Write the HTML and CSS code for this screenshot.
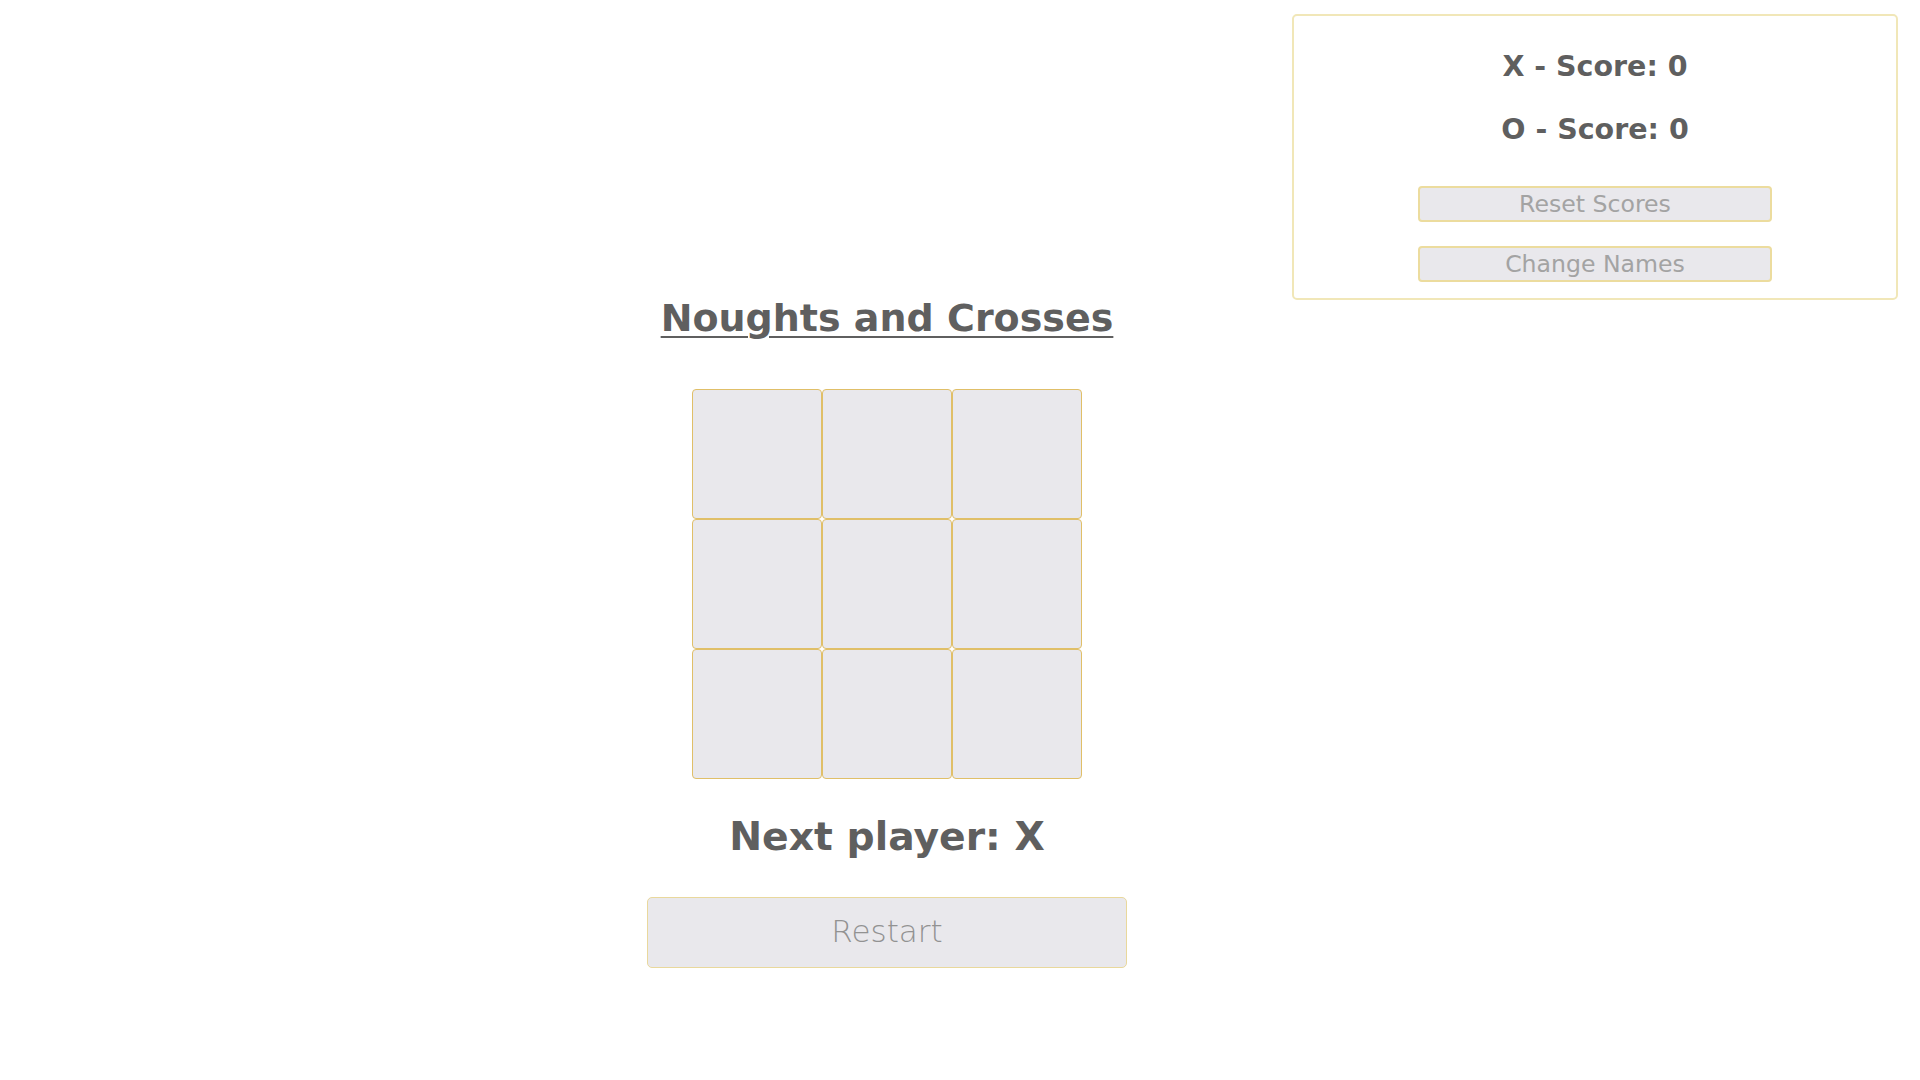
FILE: index.html
```html
<!DOCTYPE html>
<html lang="en">
<head>
<meta charset="utf-8">
<title>Noughts and Crosses</title>
<link rel="stylesheet" href="styles.css">
</head>
<body>
<div class="page">
  <main class="game">
    <h1 class="title">Noughts and Crosses</h1>
    <div class="board">
      <button class="cell"></button><button class="cell"></button><button class="cell"></button>
      <button class="cell"></button><button class="cell"></button><button class="cell"></button>
      <button class="cell"></button><button class="cell"></button><button class="cell"></button>
    </div>
    <h2 class="status">Next player: X</h2>
    <button class="restart">Restart</button>
  </main>
  <aside class="scores">
    <div class="score">X - Score: 0</div>
    <div class="score">O - Score: 0</div>
    <button class="small-btn first">Reset Scores</button>
    <button class="small-btn">Change Names</button>
  </aside>
</div>
</body>
</html>
```
FILE: styles.css
```css
* { box-sizing: border-box; }
html, body { margin: 0; padding: 0; background: #ffffff; }
body {
  font-family: "DejaVu Sans", "Liberation Sans", sans-serif;
  color: #5f5f5f;
  width: 1920px;
  height: 1080px;
  overflow: hidden;
}
.page {
  display: grid;
  grid-template-columns: 1fr;
  grid-template-rows: auto;
}
.game {
  grid-area: 1 / 1;
  display: flex;
  flex-direction: column;
  align-items: center;
  padding-top: 295px;
  padding-right: 146px;
}
.title {
  margin: 0;
  font-size: 38px;
  line-height: 46px;
  font-weight: bold;
  text-decoration: underline;
  text-decoration-thickness: 2px;
  text-underline-offset: 5px;
  color: #5f5f5f;
}
.board {
  margin-top: 48px;
  display: grid;
  grid-template-columns: repeat(3, 130px);
  grid-template-rows: repeat(3, 130px);
}
.cell {
  background: #e9e8ec;
  border: 1.5px solid #e0bf68;
  border-radius: 4px;
  margin: 0;
  padding: 0;
}
.status {
  margin: 35px 0 0;
  font-size: 39.3px;
  line-height: 46px;
  font-weight: bold;
  color: #5f5f5f;
}
.restart {
  margin-top: 37px;
  width: 480px;
  height: 71px;
  background: #e9e8ec;
  border: 1.5px solid #e9d89c;
  border-radius: 5px;
  font-family: "DejaVu Sans ExtraLight", "DejaVu Sans", sans-serif;
  font-weight: 200;
  font-size: 31px;
  color: #929292;
  padding: 0 0 4px;
}
.scores {
  grid-area: 1 / 1;
  justify-self: end;
  align-self: start;
  margin-top: 14px;
  margin-right: 22px;
  width: 606px;
  height: 286px;
  border: 2px solid #f1e7b8;
  border-radius: 5px;
  display: flex;
  flex-direction: column;
  align-items: center;
  padding-top: 34px;
}
.score {
  font-size: 28.5px;
  line-height: 34px;
  font-weight: bold;
  color: #5f5f5f;
}
.score + .score { margin-top: 29px; }
.small-btn {
  width: 354px;
  height: 36px;
  background: #e9e8ec;
  border: 2px solid #ecdc9e;
  border-radius: 4px;
  font-family: "DejaVu Sans", sans-serif;
  font-size: 23.6px;
  color: #a3a3a3;
  padding: 0;
  margin-top: 24px;
}
.small-btn.first { margin-top: 39px; }
```
